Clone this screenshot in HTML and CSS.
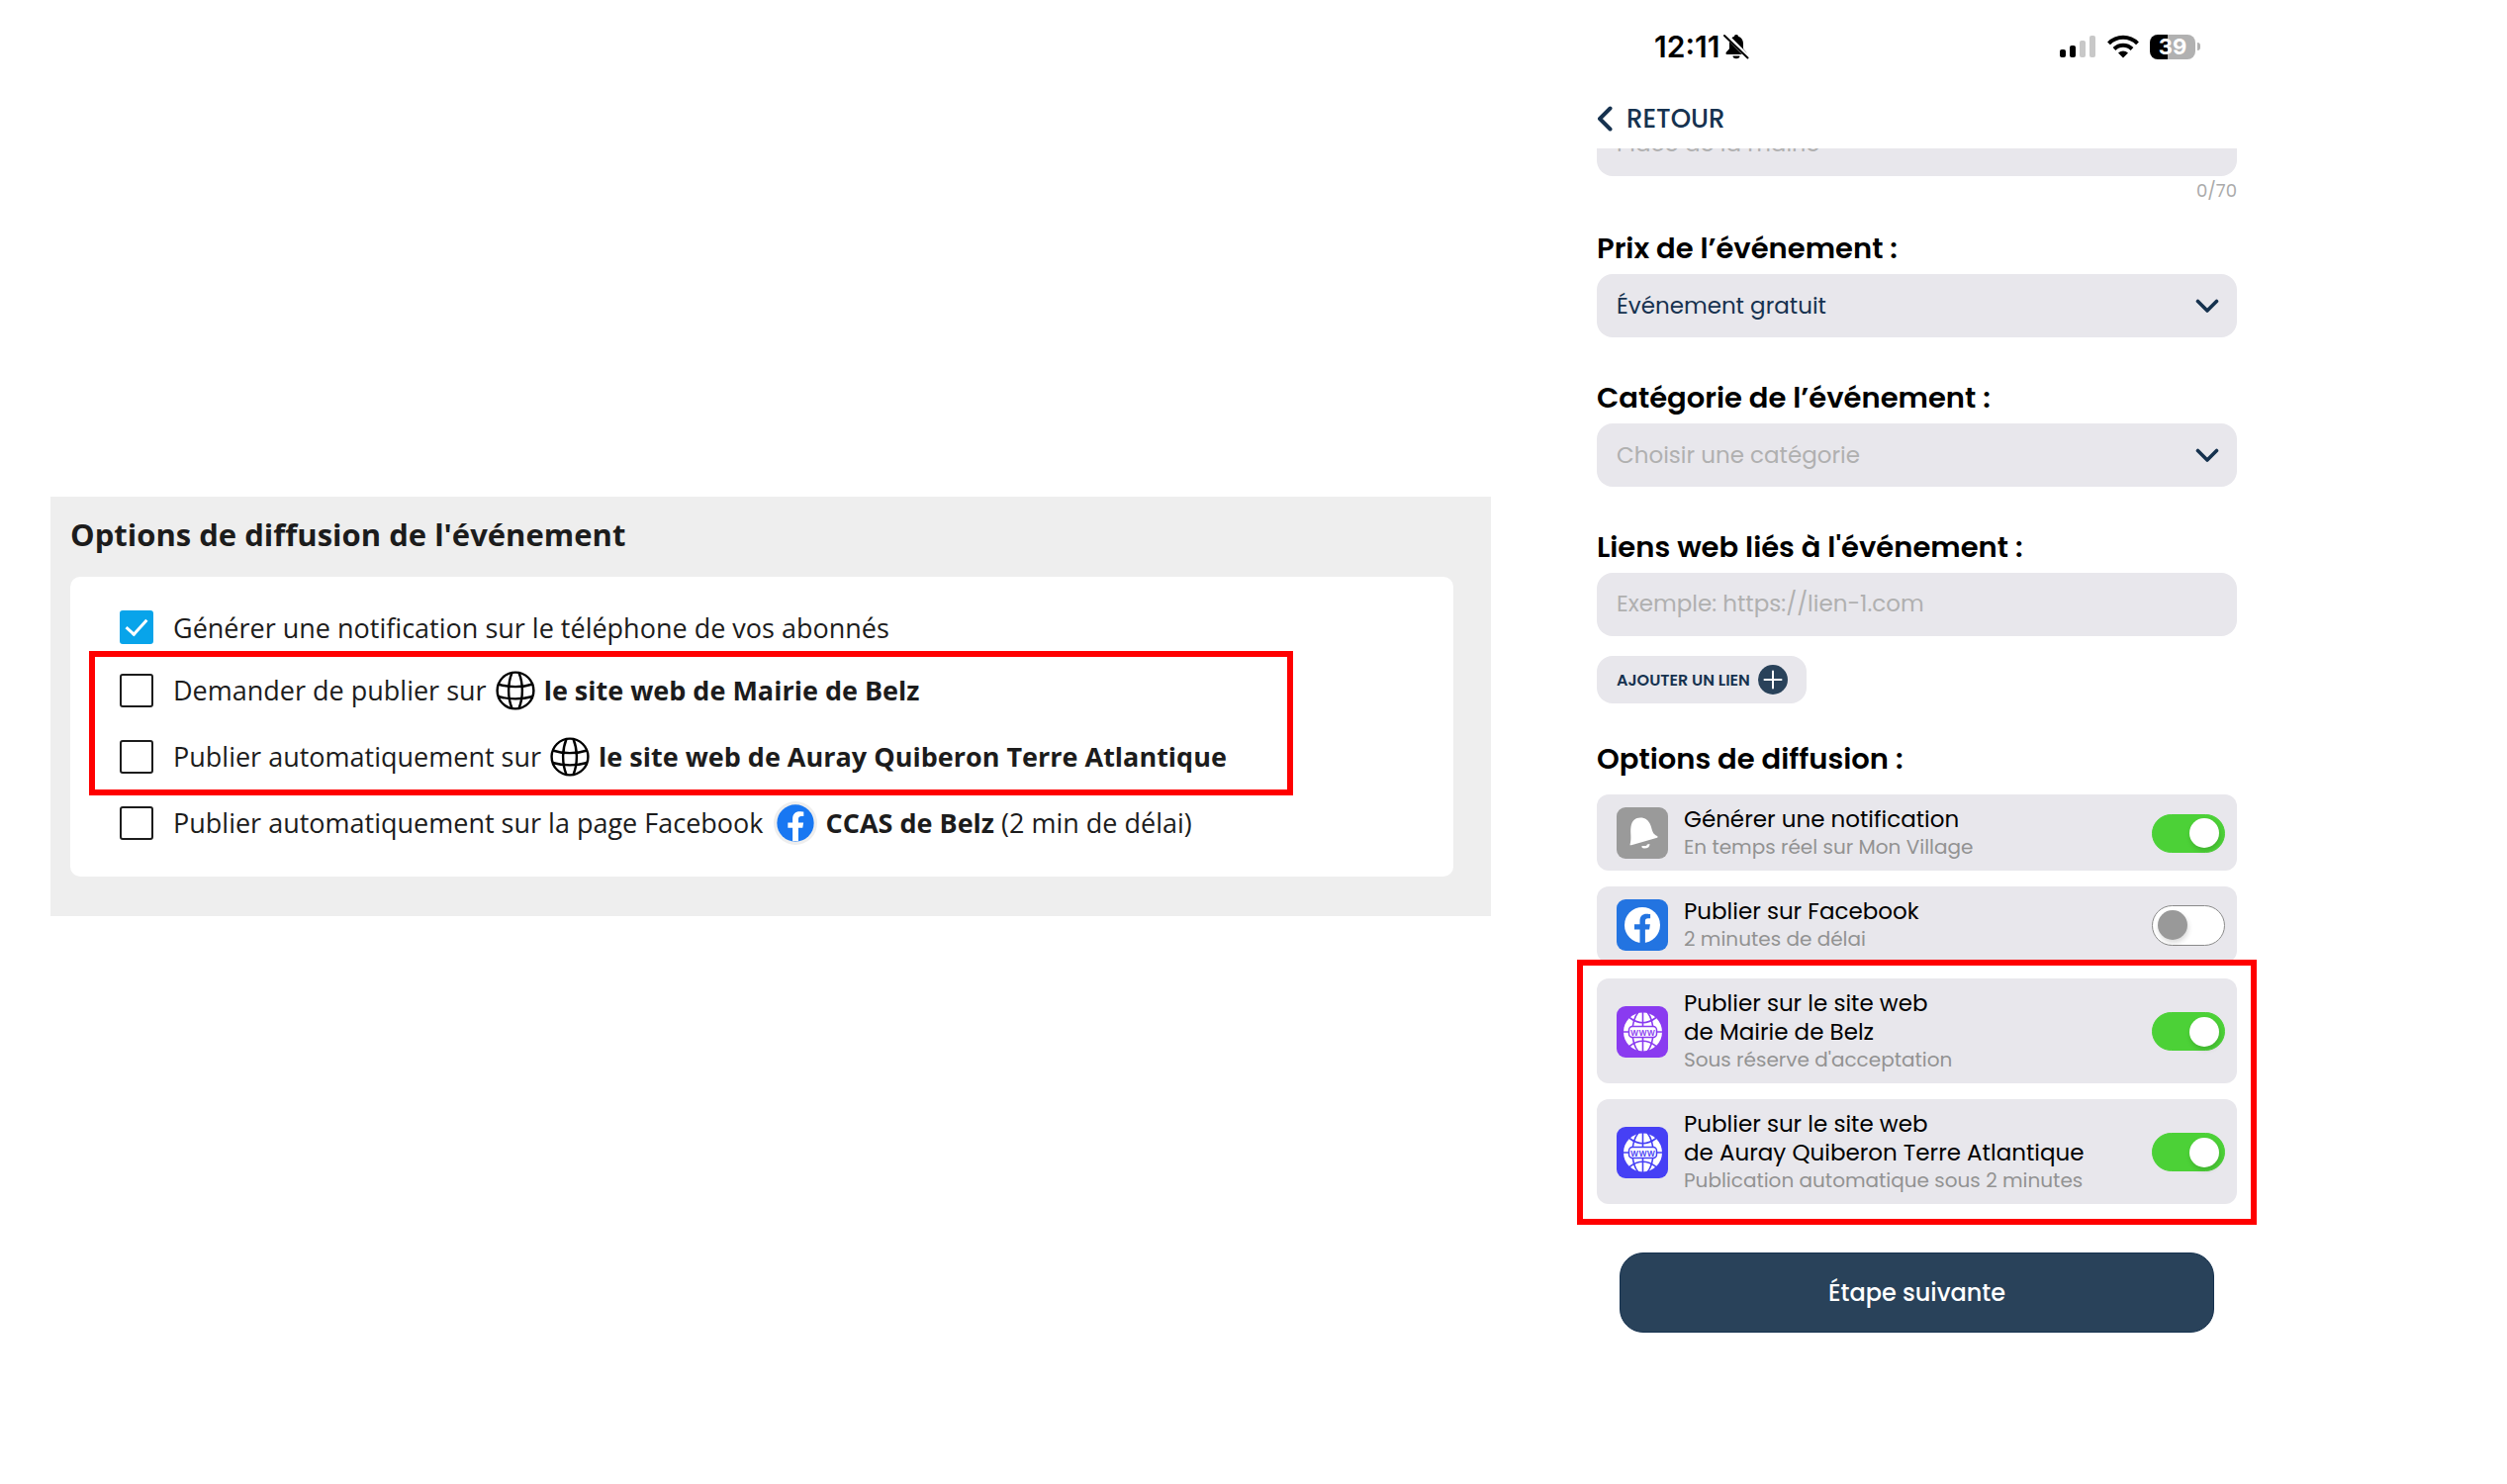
FILE: index.html
```
<!DOCTYPE html>
<html lang="fr">
<head>
    <meta charset="UTF-8">
    <meta name="viewport" content="width=device-width, initial-scale=1.0">
    <title>Options de diffusion</title>
    <link rel="stylesheet" href="styles.css">
</head>
<body>
    <!-- Icônes réutilisées -->
    <svg class="sprite" aria-hidden="true">
        <symbol id="globe" viewBox="0 0 40 40">
            <g fill="none" stroke="#000" stroke-width="2.4">
                <circle cx="20" cy="20" r="18.4"/>
                <path d="M16.5 2C12 13 12 27 16.5 38M23.500 2C28 13 28 27 23.500 38"/>
                <path d="M2.500 13.500C13 17 27 17 37.500 13.500M2.500 26C13 29 27 29 37.500 26"/>
            </g>
        </symbol>
        <symbol id="globe-www" viewBox="0 0 52 52">
            <circle cx="26.500" cy="26" r="19.500" fill="#fff"/>
            <g fill="none" stroke="currentColor" stroke-width="1.600">
                <path d="M26.500 6V46M6 26H47"/>
                <path d="M22 6C14 16 14 36 22 46M31 6C39 16 39 36 31 46"/>
                <path d="M13 11.500Q26.500 22 40 11.500M13 40.500Q26.500 30 40 40.500"/>
            </g>
            <rect x="12.500" y="20.500" width="28" height="11" rx="3.500" fill="#fff" stroke="currentColor" stroke-width="1.500"/>
        </symbol>
        <symbol id="chevron" viewBox="0 0 24 16">
            <path d="M2.500 2.500L12 12L21.500 2.500" fill="none" stroke="#16324f" stroke-width="3.600" stroke-linecap="round" stroke-linejoin="round"/>
        </symbol>
    </svg>

    <main class="page">
        <!-- Version web -->
        <section class="web-panel">
            <h1>Options de diffusion de l'événement</h1>
            <div class="web-card">
                <label class="check-row first">
                    <input type="checkbox" class="check" checked>
                    <span>Générer une notification sur le téléphone de vos abonnés</span>
                </label>
                <div class="web-highlight">
                    <label class="check-row">
                        <input type="checkbox" class="check">
                        <span>Demander de publier sur</span>
                        <svg class="globe"><use href="#globe"/></svg>
                        <strong>le site web de Mairie de Belz</strong>
                    </label>
                    <label class="check-row">
                        <input type="checkbox" class="check">
                        <span>Publier automatiquement sur</span>
                        <svg class="globe"><use href="#globe"/></svg>
                        <strong>le site web de Auray Quiberon Terre Atlantique</strong>
                    </label>
                </div>
                <label class="check-row">
                    <input type="checkbox" class="check">
                    <span>Publier automatiquement sur la page Facebook</span>
                    <svg class="fb-round" viewBox="0 0 46 46">
                        <circle cx="23" cy="23" r="23" fill="#eee"/>
                        <circle cx="23" cy="23" r="19.500" fill="#1877f2"/>
                        <path d="M20 42V28h-5v-5.500h5v-4.200c0-5 3-7.700 7.500-7.700 2.100 0 4.200.4 4.200.4v4.700h-2.400c-2.400 0-3.200 1.500-3.200 3v3.800h5.400l-.9 5.500h-4.500V42z" fill="#fff"/>
                    </svg>
                    <span><strong>CCAS de Belz</strong> (2 min de délai)</span>
                </label>
            </div>
        </section>

        <!-- Version mobile -->
        <section class="phone">
            <div class="status-bar">
                <div class="status-left">
                    <span>12:11</span>
                    <svg class="bell-off" viewBox="0 0 26 26">
                        <path d="M13 1c-1.500 0-2 1-2 1.700C7.500 3.800 6 7 6 10v4.500c0 2-3.500 3.500-3.500 5.500 0 .7.500 1 1.200 1h18.600c.7 0 1.200-.3 1.200-1 0-2-3.500-3.500-3.500-5.500V10c0-3-1.500-6.200-5-7.300C15 2 14.500 1 13 1zM9.500 22.500a3.500 2.800 0 0 0 7 0z"/>
                        <path d="M2 1L25 24" stroke="#fff" stroke-width="4.500"/>
                        <path d="M1 2L24.500 24.500" stroke="#000" stroke-width="2" stroke-linecap="round"/>
                    </svg>
                </div>
                <div class="status-right">
                    <svg class="signal" viewBox="0 0 36 24">
                        <rect x="0" y="15" width="6" height="8" rx="2"/>
                        <rect x="10" y="11" width="6" height="12" rx="2"/>
                        <rect x="20" y="6" width="6" height="17" rx="2" fill="#c8c8c8"/>
                        <rect x="30" y="1" width="6" height="22" rx="2" fill="#c8c8c8"/>
                    </svg>
                    <svg class="wifi" viewBox="0 0 32 24">
                        <g fill="none" stroke="#000" stroke-width="4">
                            <path d="M1.500 8.800C9.500.6 22.500.6 30.500 8.800"/>
                            <path d="M7 14.500C12 9.500 20 9.500 25 14.500"/>
                        </g>
                        <path d="M11 18.500c3-2.800 7-2.800 10 0L16 23.500z"/>
                    </svg>
                    <span class="battery">39</span>
                    <span class="battery-cap"></span>
                </div>
            </div>

            <nav class="nav">
                <a href="#" class="back">
                    <svg viewBox="0 0 16 26"><path d="M13.500 2.500L3 13L13.500 23.500" fill="none" stroke="#16324f" stroke-width="4" stroke-linecap="round" stroke-linejoin="round"/></svg>
                    RETOUR
                </a>
            </nav>

            <form class="form">
                <!-- Champ caché en partie par le défilement -->
                <div class="scrolled">
                    <input type="text" class="field" aria-label="Lieu" placeholder="Place de la mairie">
                </div>
                <div class="counter">0/70</div>

                <div class="form-group">
                    <label for="prix">Prix de l’événement :</label>
                    <div class="select-wrap">
                        <select id="prix" class="field">
                            <option>Événement gratuit</option>
                        </select>
                        <svg class="chevron"><use href="#chevron"/></svg>
                    </div>
                </div>

                <div class="form-group">
                    <label for="categorie">Catégorie de l’événement :</label>
                    <div class="select-wrap">
                        <select id="categorie" class="field empty">
                            <option>Choisir une catégorie</option>
                        </select>
                        <svg class="chevron"><use href="#chevron"/></svg>
                    </div>
                </div>

                <div class="form-group">
                    <label for="lien">Liens web liés à l'événement :</label>
                    <input type="text" id="lien" class="field" placeholder="Exemple: https://lien-1.com">
                </div>

                <button type="button" class="add-btn">
                    AJOUTER UN LIEN
                    <svg viewBox="0 0 30 30"><circle cx="15" cy="15" r="15" fill="#29425a"/><path d="M15 6.500V23.500M6.500 15H23.500" stroke="#fff" stroke-width="2" stroke-linecap="round"/></svg>
                </button>

                <h2>Options de diffusion :</h2>
                <div class="options">
                    <label class="option">
                        <svg class="option-icon grey" viewBox="0 0 52 52">
                            <path d="M13.500 38C15.500 31 13.500 26 14.500 19.500C15.500 13.500 19 10.500 24 10.500C29 10.500 32.500 13 34.500 18.500C36.500 24.500 36.500 27 41 29Q42.500 30 41 30.800L15 38.200Q13.500 38.600 13.500 38z" fill="#fff"/>
                            <path d="M25.500 39q-.5 2.500 2.500 2.500 5.500 0 5.500-4.500l-2.500.6q-.5 1.700-2 1.300z" fill="#fff"/>
                        </svg>
                        <span class="option-text">
                            <b>Générer une notification</b>
                            <small>En temps réel sur Mon Village</small>
                        </span>
                        <input type="checkbox" class="toggle" checked>
                    </label>
                    <label class="option">
                        <svg class="option-icon blue" viewBox="0 0 52 52">
                            <circle cx="26" cy="26" r="18" fill="#fff"/>
                            <path d="M23.500 44V30.500H18V25.300h5.500v-3.600c0-4.600 2.700-7 6.800-7 1.800 0 3.800.3 3.800.3v4.200h-2.300c-2.200 0-2.900 1.300-2.900 2.700v3.400h5l-.8 5.200h-4.200V44z" fill="#2374e1"/>
                        </svg>
                        <span class="option-text">
                            <b>Publier sur Facebook</b>
                            <small>2 minutes de délai</small>
                        </span>
                        <input type="checkbox" class="toggle">
                    </label>
                    <div class="phone-highlight">
                        <label class="option">
                            <svg class="option-icon purple" viewBox="0 0 52 52">
                                <use href="#globe-www"/>
                                <text x="26.500" y="29.500" text-anchor="middle" fill="currentColor">WWW</text>
                            </svg>
                            <span class="option-text">
                                <b>Publier sur le site web<br>de Mairie de Belz</b>
                                <small>Sous réserve d'acceptation</small>
                            </span>
                            <input type="checkbox" class="toggle" checked>
                        </label>
                        <label class="option">
                            <svg class="option-icon indigo" viewBox="0 0 52 52">
                                <use href="#globe-www"/>
                                <text x="26.500" y="29.500" text-anchor="middle" fill="currentColor">WWW</text>
                            </svg>
                            <span class="option-text">
                                <b>Publier sur le site web<br>de Auray Quiberon Terre Atlantique</b>
                                <small>Publication automatique sous 2 minutes</small>
                            </span>
                            <input type="checkbox" class="toggle" checked>
                        </label>
                    </div>
                </div>

                <button type="submit" class="next-btn">Étape suivante</button>
            </form>
        </section>
    </main>
</body>
</html>
```
FILE: styles.css
```
/* Base */
* {
    box-sizing: border-box;
}

body {
    margin: 0;
    background-color: #fff;
    color: #1c1c1c;
    font-family: "Open Sans", sans-serif;
}

.sprite {
    position: absolute;
    width: 0;
    height: 0;
}

.page {
    display: grid;
    grid-template-columns: 1456fr 647fr;
    column-gap: 107px;
    min-height: 100vh;
    padding: 0 273px 0 51px;
    align-items: start;
}

/* Panneau web */
.web-panel {
    margin-top: 502px;
    padding: 15px 38px 40px 20px;
    background-color: #eee;
}

.web-panel h1 {
    margin: 0 0 20px;
    font-size: 31px;
    line-height: 46px;
    font-weight: 700;
}

.web-card {
    padding: 21px 50px;
    background-color: #fff;
    border-radius: 10px;
}

.check-row {
    display: flex;
    align-items: center;
    height: 67px;
    gap: 9px;
    font-size: 27px;
    white-space: nowrap;
}

.check-row.first {
    height: 60px;
}

.check {
    appearance: none;
    display: grid;
    place-items: center;
    width: 34px;
    height: 34px;
    margin: 0 11px 0 0;
    border: 2px solid #1c1c1c;
    border-radius: 3px;
    background-color: #fff;
}

.check:checked {
    border-color: #08a4ea;
    background-color: #08a4ea;
}

.check:checked::before {
    content: "";
    width: 9px;
    height: 18px;
    margin-bottom: 6px;
    border: solid #fff;
    border-width: 0 3px 3px 0;
    transform: rotate(42deg);
}

.globe {
    width: 40px;
    height: 40px;
}

.fb-round {
    width: 44px;
    height: 44px;
    margin-left: 1px;
}

/* Cadres rouges */
.web-highlight,
.phone-highlight {
    position: relative;
}

.web-highlight::after,
.phone-highlight::after {
    content: "";
    position: absolute;
    border: 6px solid #f00;
    pointer-events: none;
}

.web-highlight::after {
    inset: -6px 112px -6px -31px;
}

.phone-highlight::after {
    inset: -19px -20px -21px;
}

/* Ecran mobile */
.phone {
    color: #000;
    font-family: "Poppins", "Inter", sans-serif;
}

.status-bar {
    display: flex;
    justify-content: space-between;
    align-items: center;
    height: 94px;
    padding: 0 37px 0 58px;
}

.status-left,
.status-right {
    display: flex;
    align-items: center;
    font-family: "Inter", sans-serif;
}

.status-left {
    gap: 4px;
    font-size: 30px;
    font-weight: 600;
}

.bell-off {
    width: 26px;
    height: 26px;
}

.signal {
    width: 36px;
    height: 24px;
    margin-right: 12px;
}

.wifi {
    width: 32px;
    height: 24px;
    margin-right: 11px;
}

.battery {
    width: 46px;
    height: 25px;
    border-radius: 8px;
    background: linear-gradient(90deg, #000 39%, #b1b1b1 39%);
    color: #fff;
    font-size: 22px;
    font-weight: 700;
    line-height: 25px;
    text-align: center;
}

.battery-cap {
    width: 3px;
    height: 8px;
    margin-left: 2px;
    border-radius: 0 3px 3px 0;
    background-color: #b1b1b1;
}

.nav {
    height: 56px;
}

.back {
    display: inline-flex;
    align-items: center;
    gap: 14px;
    height: 52px;
    color: #16324f;
    font-size: 26px;
    font-weight: 500;
    text-decoration: none;
}

.back svg {
    width: 16px;
    height: 26px;
}

/* Formulaire */
.scrolled {
    display: flex;
    align-items: flex-end;
    height: 28px;
    overflow: hidden;
}

.field {
    flex: none;
    display: block;
    appearance: none;
    width: 100%;
    height: 64px;
    padding: 0 20px;
    border: none;
    border-radius: 16px;
    background-color: #e8e7ec;
    color: #16324f;
    font-family: inherit;
    font-size: 23px;
}

input.field {
    padding-bottom: 3px;
}

select.field {
    padding-right: 60px;
}

.field::placeholder,
.field.empty {
    color: #b0b0b0;
    opacity: 1;
}

.counter {
    height: 57px;
    padding-top: 5px;
    color: #aaa;
    font-size: 18px;
    line-height: 20px;
    text-align: right;
}

.form-group {
    margin-bottom: 45px;
}

.form-group label,
.form h2 {
    display: block;
    margin: 0 0 10px;
    font-size: 29px;
    font-weight: 600;
    line-height: 32px;
}

.select-wrap {
    position: relative;
}

.chevron {
    position: absolute;
    top: 25px;
    right: 18px;
    width: 24px;
    height: 16px;
    pointer-events: none;
}

.add-btn {
    display: flex;
    align-items: center;
    gap: 8px;
    height: 48px;
    margin: -25px 0 40px;
    padding: 0 19px 0 20px;
    border: none;
    border-radius: 16px;
    background-color: #e8e7ec;
    color: #16324f;
    font-family: inherit;
    font-size: 16px;
    font-weight: 600;
}

.add-btn svg {
    width: 30px;
    height: 30px;
}

.form h2 {
    margin-bottom: 20px;
}

/* Options de diffusion */
.options,
.phone-highlight {
    display: flex;
    flex-direction: column;
    gap: 16px;
}

.option {
    display: flex;
    align-items: center;
    gap: 16px;
    padding: 11px 12px 10px 20px;
    border-radius: 12px;
    background-color: #e8e7ec;
}

.option-icon {
    width: 52px;
    height: 52px;
    border-radius: 9px;
}

.option-icon text {
    font-family: "Inter", sans-serif;
    font-size: 8px;
    font-weight: 600;
}

.grey {
    background-color: #9a9a9a;
}

.blue {
    background-color: #2374e1;
}

.purple {
    background-color: #8a3bf0;
    color: #8a3bf0;
}

.indigo {
    background-color: #4640f5;
    color: #4640f5;
}

.option-text {
    flex: 1;
    white-space: nowrap;
}

.option-text b {
    display: block;
    font-size: 23px;
    font-weight: 400;
    line-height: 29px;
}

.option-text small {
    display: block;
    color: #929292;
    font-size: 20px;
    line-height: 27px;
}

.toggle {
    appearance: none;
    display: flex;
    align-items: center;
    width: 74px;
    height: 41px;
    margin: 0;
    padding: 0 5px;
    border: 1px solid #8a8a8a;
    border-radius: 21px;
    background-color: #fff;
}

.toggle::before {
    content: "";
    width: 30px;
    height: 30px;
    border-radius: 50%;
    background-color: #999;
    box-shadow: 1px 3px 5px rgba(0, 0, 0, 0.15);
}

.toggle:checked {
    justify-content: flex-end;
    height: 39px;
    border-color: #4cd137;
    background-color: #4cd137;
}

.toggle:checked::before {
    background-color: #fff;
}

.next-btn {
    display: block;
    width: calc(100% - 46px);
    height: 81px;
    margin: 49px auto 0;
    border: 1px solid #16324f;
    border-radius: 24px;
    background-color: #29425a;
    color: #fff;
    font-family: inherit;
    font-size: 24px;
    font-weight: 500;
}
```
